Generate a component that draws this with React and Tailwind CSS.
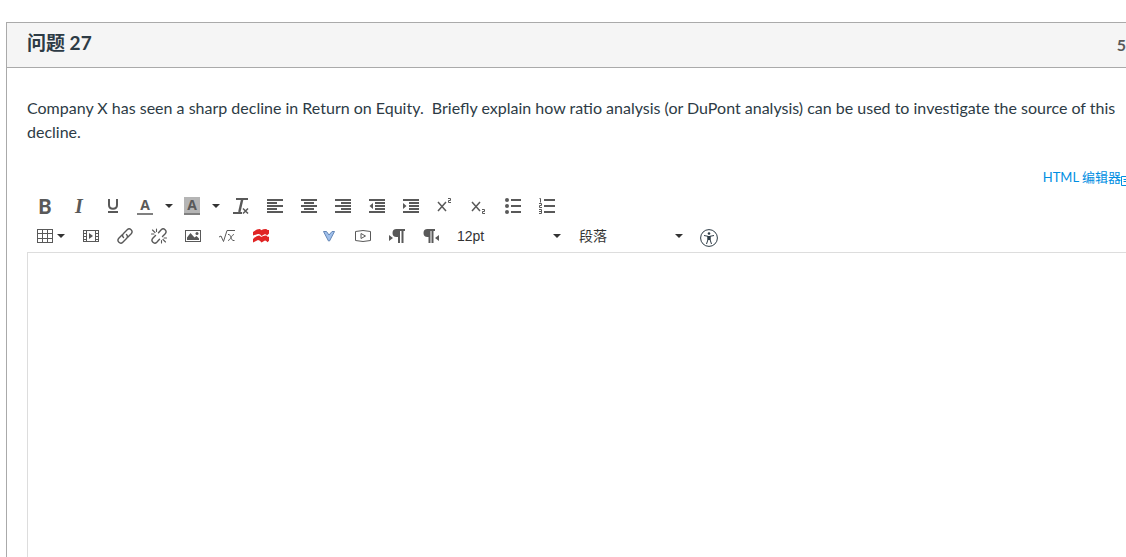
import React from "react";

function Icon({ children }) {
  return (
    <svg width="16" height="16" viewBox="0 0 16 16" fill="currentColor" aria-hidden="true" className="shrink-0">
      {children}
    </svg>
  );
}

function Caret() {
  return (
    <svg width="8" height="4" viewBox="0 0 8 4" fill="#333" aria-hidden="true" className="shrink-0">
      <path d="M0 0h8L4 4z" />
    </svg>
  );
}

const icons = {
  underline: (
    <>
      <path d="M4 1v6Q4 10.800 8 10.800T12 7V1" fill="none" stroke="currentColor" strokeWidth="2" />
      <path d="M3 13h10v2H3z" />
    </>
  ),
  clear: (
    <>
      <path d="M3 0h12v2H3zM0 14h9v2H0z" />
      <path d="M9.300 1 6.300 14" stroke="currentColor" strokeWidth="2.400" />
      <path d="m10 10.500 5 5m0-5-5 5" stroke="currentColor" strokeWidth="1.500" />
    </>
  ),
  left: <path d="M0 1h16v2H0zM0 4h10v2H0zM0 7h16v2H0zM0 10h10v2H0zM0 13h16v2H0z" />,
  center: <path d="M0 1h16v2H0zM3 4h10v2H3zM0 7h16v2H0zM3 10h10v2H3zM0 13h16v2H0z" />,
  right: <path d="M0 1h16v2H0zM6 4h10v2H6zM0 7h16v2H0zM6 10h10v2H6zM0 13h16v2H0z" />,
  outdent: <path d="M0 1h16v2H0zM6 4h10v2H6zM6 7h10v2H6zM6 10h10v2H6zM0 13h16v2H0zM4 5v6L.5 8z" />,
  indent: <path d="M0 1h16v2H0zM6 4h10v2H6zM6 7h10v2H6zM6 10h10v2H6zM0 13h16v2H0zM0 5v6l3.500-3z" />,
  sup: (
    <>
      <path d="m1 4 8 9m0-9-8 9" stroke="currentColor" strokeWidth="1.500" />
      <path d="M11 .5h2.500v2H11.500v2H14" fill="none" stroke="currentColor" />
    </>
  ),
  sub: (
    <>
      <path d="m1 4 8 9m0-9-8 9" stroke="currentColor" strokeWidth="1.500" />
      <path d="M11 11.500h2.500v2H11.500v2H14" fill="none" stroke="currentColor" />
    </>
  ),
  bullets: (
    <>
      <circle cx="2" cy="2" r="2" />
      <circle cx="2" cy="8" r="2" />
      <circle cx="2" cy="14" r="2" />
      <path d="M6 1h10v2H6zM6 7h10v2H6zM6 13h10v2H6z" />
    </>
  ),
  numbers: (
    <>
      <path d="M5 1h11v2H5zM5 7h11v2H5zM5 13h11v2H5z" />
      <path d="M.5.5h1V4.500M0 5.500h2.500v2h-2v2H3M0 11.500h2.500v4H0m0-2h2.500" fill="none" stroke="currentColor" />
    </>
  ),
  table: <path fillRule="evenodd" d="M0 1h16v14H0zM1 2v3h4V2zm5 0v3h4V2zm5 0v3h4V2zM1 6v4h4V6zm5 0v4h4V6zm5 0v4h4V6zM1 11v3h4v-3zm5 0v3h4v-3zm5 0v3h4v-3z" />,
  media: (
    <>
      <path fillRule="evenodd" d="M0 2h16v12H0zM1 3v2h2V3zm0 3v2h2V6zm0 3v2h2V9zm0 3v1h2v-1zM4 3v10h8V3zm9 0v2h2V3zm0 3v2h2V6zm0 3v2h2V9zm0 3v1h2v-1z" />
      <path d="M6 5v6l4-3z" />
    </>
  ),
  link: (
    <g fill="none" stroke="currentColor" strokeWidth="1.400" strokeLinecap="round">
      <path d="M6.500 9.500C5 8 5.500 6.500 6.500 5.500l3.700-3.700c2.500-2.500 6.500 1 4 4L11 9" />
      <path d="M9.500 6.500C11 8 10.500 9.500 9.500 10.500l-3.700 3.700c-2.500 2.500-6.500-1-4-4L5 7" />
    </g>
  ),
  unlink: (
    <g fill="none" stroke="currentColor" strokeWidth="1.400" strokeLinecap="round">
      <path d="m7.500 4.800 2.700-3c2.500-2.500 6.500 1 4 4l-2.700 2.700M8.500 11.200l-2.700 3c-2.500 2.500-6.500-1-4-4l2.700-2.700" />
      <path d="M5.500 1v2.500M1.500 2 4 4.500M.5 6H3M10.500 12.500V15M12 11.500l2.500 2.500M13 10h2.500" strokeWidth="1.100" />
    </g>
  ),
  image: (
    <>
      <path fillRule="evenodd" d="M0 2h16v12H0zM1 3v10h14V3z" />
      <path d="M2 12V9.500L5.500 5l4 4.500 2-1.500 2.500 2.500V12z" />
      <circle cx="12" cy="5.500" r="1.500" />
    </>
  ),
  root: (
    <>
      <path d="m0 9 2-1 2.500 5.500L8 2.500h8" fill="none" stroke="currentColor" />
      <path d="M9 6.500h1c1.500 0 2.500 6 4 6h1.500M9 12.500c2.500 0 3.500-6 6-6" fill="none" stroke="currentColor" />
    </>
  ),
  waves: (
    <g fill="#e02424">
      <path d="M0 7.500V4Q3.500 1 6.500 1q1 0 1.500 1.200Q10.500 1 12.500 1q1.500 0 2 1H16v3.500l-2 2q-1-1.700-2.500-1.200L8.500 8Q7 5.500 5 6z" />
      <path d="M0 14.500V11q3.500-3.500 6-3.500 1.500 0 2 1.500 2.500-1.500 4.500-1.500 1.500 0 2 1.200H16v4l-1.500 1.500q-1.500-2-3-1.500L8.500 14.500Q7 12 5 12z" />
    </g>
  ),
  vee: <path d="M2.500 3.500h3L8 7l3-3.500h2.500L8.500 13h-1z" fill="#9fbfeb" stroke="#6486b5" />,
  video: (
    <>
      <path d="M.5 3.500Q8 1.500 15.500 3.500v9Q8 14.500.5 12.500z" fill="none" stroke="currentColor" />
      <path d="M6 5.500v5l4.500-2.500z" fill="none" stroke="currentColor" />
    </>
  ),
  ltr: <path d="M7.500 1H16v2h-1.500v12h-2V3H11v12H9V9H7.500a4 4 0 0 1 0-8zM0 7v6l4-3z" />,
  rtl: <path d="M4.500 1H12v2h-1.500v12h-2V3H7.500v12h-2V9h-1a4 4 0 0 1 0-8zM16 7v6l-4-3z" />,
};

function Tool({ name, label, blank }) {
  return (
    <button type="button" aria-label={label} className="flex h-[30px] w-[34px] shrink-0 items-center justify-center">
      {!blank && <Icon>{icons[name]}</Icon>}
    </button>
  );
}

function ColorTool({ label, swatch }) {
  return (
    <div className="flex shrink-0">
      <button type="button" aria-label={label} className="flex h-[30px] w-[30px] items-center justify-center">
        <span
          className={`flex h-[18px] w-4 items-center justify-center border-b-2 border-[#808080] font-['Open_Sans',sans-serif] text-sm leading-4 font-bold ${swatch}`}
        >
          A
        </span>
      </button>
      <button type="button" aria-label={`${label} options`} className="flex h-[30px] w-[17px] items-center justify-center">
        <Caret />
      </button>
    </div>
  );
}

function Picker({ label, value }) {
  return (
    <div className="relative flex h-[30px] w-[122px] shrink-0 items-center">
      <select aria-label={label} className="h-full w-full appearance-none bg-transparent pl-[9px] text-sm text-[#333]">
        <option>{value}</option>
      </select>
      <span className="pointer-events-none absolute right-[9px]">
        <Caret />
      </span>
    </div>
  );
}

const firstRow = [
  ["clear", "Clear formatting"],
  ["left", "Align left"],
  ["center", "Align center"],
  ["right", "Align right"],
  ["outdent", "Decrease indent"],
  ["indent", "Increase indent"],
  ["sup", "Superscript"],
  ["sub", "Subscript"],
  ["bullets", "Bullet list"],
  ["numbers", "Numbered list"],
];

const insertTools = [
  ["media", "Insert media"],
  ["link", "Insert link"],
  ["unlink", "Remove link"],
  ["image", "Insert image"],
  ["root", "Insert equation"],
  ["waves", "Publisher tools"],
];

const embedTools = [
  ["vee", "More tools"],
  ["video", "Record media"],
  ["ltr", "Left to right"],
  ["rtl", "Right to left"],
];

export default function App() {
  return (
    <div className="flex min-h-screen flex-col overflow-hidden bg-white pt-[22px] pl-[6px] font-['Lato','Noto_Sans_CJK_SC',sans-serif] text-[#2d3b45]">
      <section className="flex grow flex-col border-t border-l border-[#aaa]">
        <header className="flex h-[45px] items-center justify-between border-b border-[#aaa] bg-[#f5f5f5] pl-5">
          <h1 className="pb-1 text-[19px] leading-6 font-bold">问题 27</h1>
          <span className="text-base font-bold text-[#595959]">5</span>
        </header>
        <div className="flex grow flex-col pt-7 pl-5">
          <p className="pr-2 text-base leading-6">
            Company X has seen a sharp decline in Return on Equity.&nbsp; Briefly explain how ratio analysis (or DuPont
            analysis) can be used to investigate the source of this decline.
          </p>
          <a href="#html" className="mt-[23px] flex h-5 items-center self-end text-[13px] leading-5 text-[#008ee2]">
            HTML 编辑器
            <svg width="5" height="10" viewBox="0 0 5 10" fill="none" stroke="currentColor" aria-hidden="true" className="mt-2">
              <path d="M5 .5H.5v9H5M2.500 3.500H5M2.500 5.500H5" />
            </svg>
          </a>
          <div role="toolbar" aria-label="Editor" className="mt-1 flex flex-col pb-px pl-px font-['Liberation_Sans','Noto_Sans_CJK_SC',sans-serif] text-[#595959]">
            <div className="flex">
              <button type="button" aria-label="Bold" className="flex h-[30px] w-[34px] shrink-0 items-center justify-center font-['Lato',sans-serif] text-xl font-black">
                B
              </button>
              <button type="button" aria-label="Italic" className="flex h-[30px] w-[34px] shrink-0 items-center justify-center font-['Liberation_Serif',serif] text-xl font-bold italic">
                I
              </button>
              <Tool name="underline" label="Underline" />
              <ColorTool label="Text color" swatch="bg-white" />
              <ColorTool label="Background color" swatch="bg-[#b5b5b5]" />
              {firstRow.map(([name, label]) => (
                <Tool key={name} name={name} label={label} />
              ))}
            </div>
            <div className="flex">
              <button type="button" aria-label="Table" className="flex h-[30px] w-[46px] shrink-0 items-center gap-1 pl-[9px]">
                <Icon>{icons.table}</Icon>
                <Caret />
              </button>
              {insertTools.map(([name, label]) => (
                <Tool key={name} name={name} label={label} />
              ))}
              <Tool blank label="External tool" />
              {embedTools.map(([name, label]) => (
                <Tool key={name} name={name} label={label} />
              ))}
              <Picker label="Font size" value="12pt" />
              <Picker label="Paragraph format" value="段落" />
              <button type="button" aria-label="Check accessibility" className="flex h-[30px] w-[34px] shrink-0 items-center justify-center pt-1 text-[#2d3b45]">
                <svg width="18" height="18" viewBox="0 0 18 18" fill="none" stroke="currentColor" aria-hidden="true">
                  <circle cx="9" cy="9" r="8.400" />
                  <circle cx="9" cy="4.500" r="1.300" fill="currentColor" stroke="none" />
                  <path d="m4 6.500 4 .8v3.200L6.500 15M14 6.500l-4 .8v3.200l1.500 4.500" />
                  <path d="M7.500 7h3v4h-3z" fill="currentColor" stroke="none" />
                </svg>
              </button>
            </div>
          </div>
          <textarea
            aria-label="Answer"
            className="block min-h-[305px] w-full grow resize-none border-t border-l border-[#ddd] p-2 text-base outline-none"
          />
        </div>
      </section>
    </div>
  );
}
